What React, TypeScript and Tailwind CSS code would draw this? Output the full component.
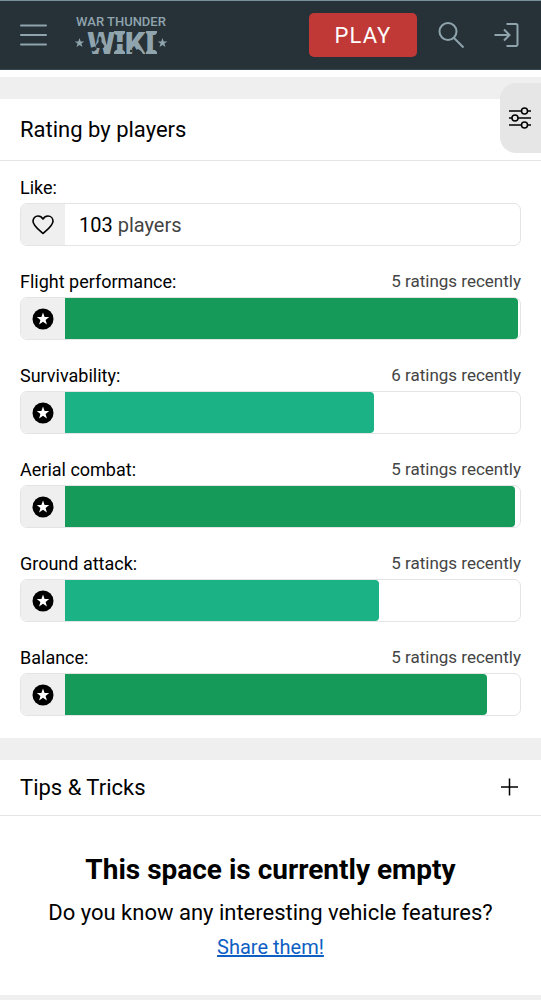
import { useState } from 'react'

interface Rating {
  label: string
  count: number
  percent: number
}

const ratings: Rating[] = [
  { label: 'Flight performance', count: 5, percent: 99.5 },
  { label: 'Survivability', count: 6, percent: 68 },
  { label: 'Aerial combat', count: 5, percent: 99 },
  { label: 'Ground attack', count: 5, percent: 69 },
  { label: 'Balance', count: 5, percent: 92.7 },
]

const STAR = 'M0 -5 L1.2 -1.6 L4.8 -1.6 L1.9 0.6 L3 4 L0 1.9 L-3 4 L-1.9 0.6 L-4.8 -1.6 L-1.2 -1.6 Z'

function Logo() {
  return (
    <svg width="92" height="58" viewBox="0 -8 92 58" aria-label="War Thunder Wiki" className="fill-[#90a4ae]">
      <text x="46" y="12" textAnchor="middle" className="font-[Roboto] text-[13px] font-medium">WAR THUNDER</text>
      <text x="46" y="40" textAnchor="middle" className="font-[Roboto] text-[32px] font-black">WIKI</text>
      {/* slab serifs on the two I letters */}
      <path d="M39 17h11v2l-2 2h-7l-2-2zM39 40h11v-2l-2-2h-7l-2 2zM71 17h11v2l-2 2h-7l-2-2zM71 40h11v-2l-2-2h-7l-2 2z" />
      <path d={STAR} transform="translate(4.5 29)" />
      <path d={STAR} transform="translate(87.5 29)" />
      {/* figures cut out of the letters */}
      <g className="fill-[#263238]">
        <path d="M25 22l1.500 2v4l3 4-1 2h-7l-1-2 3-4v-4zM40 28h9v2h-9z" />
        <path d="M15 34l5-1.500 2 2.500-3 2.500-3-1zM59 40l1-3 3-2 3 2 2 3z" />
        <circle cx="56" cy="37" r="1.200" />
      </g>
    </svg>
  )
}

function Header() {
  return (
    <header className="flex h-[70px] items-center border-t border-b border-t-[#78909c] border-b-[#37474f] bg-[#263238] px-5 text-[#90a4ae]">
      <button type="button" aria-label="Menu" className="mr-7">
        <svg width="27" height="24" viewBox="0 0 27 24" fill="none" stroke="currentColor" strokeWidth="2" strokeLinecap="round">
          <path d="M1 2.500h25M1 12h25M1 21.500h25" />
        </svg>
      </button>
      <a href="#wiki">
        <Logo />
      </a>
      <button type="button" className="ml-auto h-11 w-[108px] rounded-[5px] bg-[#c03937] text-[22px] tracking-wider text-white">
        PLAY
      </button>
      <button type="button" aria-label="Search" className="ml-5">
        <svg width="28" height="28" viewBox="0 0 28 28" fill="none" stroke="currentColor" strokeWidth="2">
          <circle cx="11" cy="10.500" r="8.500" />
          <path d="M17 17l9.500 9.500" />
        </svg>
      </button>
      <button type="button" aria-label="Log in" className="ml-7">
        <svg width="28" height="28" viewBox="0 0 28 28" fill="none" stroke="currentColor" strokeWidth="2">
          <path d="M13.500 3H23a1.500 1.500 0 0 1 1.500 1.500v19A1.500 1.500 0 0 1 23 25h-9.500M1.500 14H16M11 8.500l5.500 5.500-5.500 5.500" />
        </svg>
      </button>
    </header>
  )
}

function RatingRow({ label, count, percent }: Rating) {
  return (
    <div className="pt-5">
      <div className="flex items-center justify-between">
        <span className="text-lg leading-[31px]">{label}:</span>
        <span className="text-[17px] leading-[31px] text-[#444]">{count} ratings recently</span>
      </div>
      <div className="flex h-[43px] rounded-[7px] border border-[#e4e4e4]">
        <div className="flex w-11 shrink-0 items-center justify-center rounded-l-md bg-[#efefef]">
          <svg width="22" height="22" viewBox="-11 -11 22 22">
            <circle r="10.500" />
            <path d="M0 -6.500 L1.600 -2.100 L6.200 -2 L2.600 0.900 L3.900 5.400 L0 2.800 L-3.900 5.400 L-2.600 0.900 L-6.200 -2 L-1.600 -2.100 Z" fill="#fff" />
          </svg>
        </div>
        <div role="meter" aria-label={label} aria-valuemin={0} aria-valuemax={100} aria-valuenow={percent} className="grow">
          <div
            className={`h-full rounded-r ${percent > 80 ? 'bg-[#159a5a]' : 'bg-[#1bb385]'}`}
            style={{ width: `${percent}%` }}
          />
        </div>
      </div>
    </div>
  )
}

export default function App() {
  const [liked, setLiked] = useState(false)

  return (
    <div className="bg-[#efefef] font-[Roboto,sans-serif] text-black">
      <Header />
      <div className="h-[7px] bg-white" />

      <section className="relative mt-[22px] bg-white pb-[22px]">
        <button
          type="button"
          aria-label="Page settings"
          className="absolute -top-4 right-0 flex h-[70px] w-[41px] items-center justify-center rounded-l-2xl bg-[#e6e6e6]"
        >
          <svg width="24" height="22" viewBox="0 0 24 22" fill="none" stroke="#000" strokeWidth="1.500">
            <path d="M0 4h12.500M18.500 4H22M0 11h3M9 11H22M0 18h12.500M18.500 18H22" />
            <circle cx="15.500" cy="4" r="3" />
            <circle cx="6" cy="11" r="3" />
            <circle cx="15.500" cy="18" r="3" />
          </svg>
        </button>
        <h2 className="border-b border-[#e4e4e4] px-5 text-[22px] leading-[61px]">Rating by players</h2>
        <div className="px-5 pt-[11px]">
          <div className="text-lg leading-[31px]">Like:</div>
          <div className="flex h-[43px] items-center rounded-[7px] border border-[#e4e4e4]">
            <button
              type="button"
              aria-label="Like"
              aria-pressed={liked}
              onClick={() => setLiked(!liked)}
              className="flex h-full w-11 items-center justify-center rounded-l-md bg-[#efefef]"
            >
              <svg width="22" height="20" viewBox="0 0 22 20" fill={liked ? '#000' : 'none'} stroke="#000" strokeWidth="1.600" strokeLinejoin="round">
                <path d="M11 18.500C7 14.800 1 10.600 1 6.200C1 3.200 3.200 1 6 1c2.200 0 4 1.200 5 3c1-1.800 2.800-3 5-3c2.800 0 5 2.200 5 5.200c0 4.400-6 8.600-10 12.300z" />
              </svg>
            </button>
            <span className="pl-[14px] text-xl">
              103 <span className="text-[#444]">players</span>
            </span>
          </div>
          {ratings.map((rating) => (
            <RatingRow key={rating.label} {...rating} />
          ))}
        </div>
      </section>

      <section className="mt-[22px] bg-white">
        <div className="flex items-center justify-between border-b border-[#e4e4e4] px-5">
          <h2 className="text-[22px] leading-[55px]">Tips &amp; Tricks</h2>
          <button type="button" aria-label="Add a tip">
            <svg width="22" height="22" viewBox="0 0 22 22" stroke="#000" strokeWidth="1.500">
              <path d="M2 10h17M10.500 1.500v17" />
            </svg>
          </button>
        </div>
        <div className="px-5 pt-9 pb-[30px] text-center">
          <h3 className="text-[28px] leading-9 font-bold">This space is currently empty</h3>
          <p className="mt-[9px] text-[22px] leading-8">Do you know any interesting vehicle features?</p>
          <a href="#share" className="inline-block text-xl leading-9 text-[#0d5fc4] underline">
            Share them!
          </a>
        </div>
      </section>
      <div className="h-[5px]" />
    </div>
  )
}
